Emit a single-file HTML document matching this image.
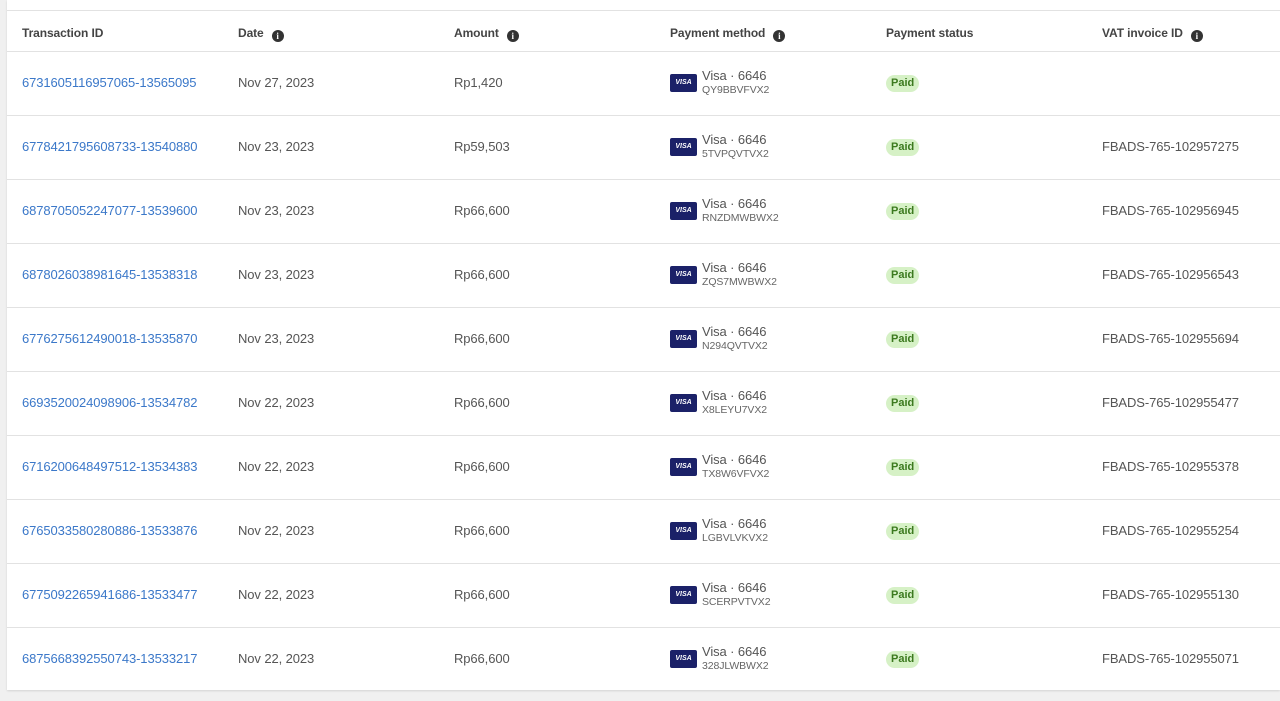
<!DOCTYPE html>
<html><head><style>
body{margin:0;width:1280px;height:701px;background:#f0f0f0;font-family:"Liberation Sans",Arial,sans-serif;overflow:hidden;position:relative}
.card{position:absolute;left:7px;top:0;width:1273px;height:690px;background:#fff;box-shadow:0 1px 2px rgba(0,0,0,.12)}
.line{position:absolute;left:7px;width:1273px;height:1px;background:#e2e2e2}
.c{position:absolute;font-size:13px;color:#555;white-space:nowrap;letter-spacing:-0.1px}
.h{font-weight:bold;font-size:12px;color:#444}
.i{display:inline-block;width:12px;height:12px;border-radius:50%;background:#333;color:#fff;font-size:9px;line-height:12px;text-align:center;font-weight:bold;margin-left:8px;vertical-align:-2px;font-family:"Liberation Serif",serif}
a{color:#3b78c9;text-decoration:none}
.visa{position:absolute;width:27px;height:18px;background:#1b2168;border-radius:2px;color:#fff;font-size:7px;font-weight:bold;font-style:italic;text-align:center;line-height:18px}
.paid{position:absolute;background:#d6f1c6;color:#3c7a1f;font-size:11px;font-weight:bold;border-radius:9px;padding:0 5px;height:17px;line-height:17px}
.sub{font-size:10.5px;color:#666}
</style></head><body>
<div class="card"></div>
<div class="line" style="top:10px"></div>
<div class="line" style="top:51px"></div>
<div class="c h" style="left:22px;top:26px">Transaction ID</div>
<div class="c h" style="left:238px;top:26px">Date<span class="i">i</span></div>
<div class="c h" style="left:454px;top:26px">Amount<span class="i">i</span></div>
<div class="c h" style="left:670px;top:26px">Payment method<span class="i">i</span></div>
<div class="c h" style="left:886px;top:26px">Payment status</div>
<div class="c h" style="left:1102px;top:26px">VAT invoice ID<span class="i">i</span></div>
<div id="rows"></div>
<script>
var d=[["6731605116957065-13565095","Nov 27, 2023","Rp1,420","QY9BBVFVX2",""],
["6778421795608733-13540880","Nov 23, 2023","Rp59,503","5TVPQVTVX2","FBADS-765-102957275"],
["6878705052247077-13539600","Nov 23, 2023","Rp66,600","RNZDMWBWX2","FBADS-765-102956945"],
["6878026038981645-13538318","Nov 23, 2023","Rp66,600","ZQS7MWBWX2","FBADS-765-102956543"],
["6776275612490018-13535870","Nov 23, 2023","Rp66,600","N294QVTVX2","FBADS-765-102955694"],
["6693520024098906-13534782","Nov 22, 2023","Rp66,600","X8LEYU7VX2","FBADS-765-102955477"],
["6716200648497512-13534383","Nov 22, 2023","Rp66,600","TX8W6VFVX2","FBADS-765-102955378"],
["6765033580280886-13533876","Nov 22, 2023","Rp66,600","LGBVLVKVX2","FBADS-765-102955254"],
["6775092265941686-13533477","Nov 22, 2023","Rp66,600","SCERPVTVX2","FBADS-765-102955130"],
["6875668392550743-13533217","Nov 22, 2023","Rp66,600","328JLWBWX2","FBADS-765-102955071"]];
var h="";d.forEach(function(r,k){var y=51+k*64,m=y+32;
h+='<div class="c" style="left:22px;top:'+(m-8)+'px"><a>'+r[0]+'</a></div>'+
'<div class="c" style="left:238px;top:'+(m-8)+'px">'+r[1]+'</div>'+
'<div class="c" style="left:454px;top:'+(m-8)+'px">'+r[2]+'</div>'+
'<div class="visa" style="left:670px;top:'+(m-9)+'px">VISA</div>'+
'<div class="c" style="left:702px;top:'+(m-15)+'px">Visa · 6646</div>'+
'<div class="c sub" style="left:702px;top:'+(m+1)+'px">'+r[3]+'</div>'+
'<div class="paid" style="left:886px;top:'+(m-8)+'px">Paid</div>'+
'<div class="c" style="left:1102px;top:'+(m-8)+'px">'+r[4]+'</div>';
if(k<9)h+='<div class="line" style="top:'+(y+64)+'px"></div>';});
document.getElementById("rows").innerHTML=h;
</script>
</body></html>
